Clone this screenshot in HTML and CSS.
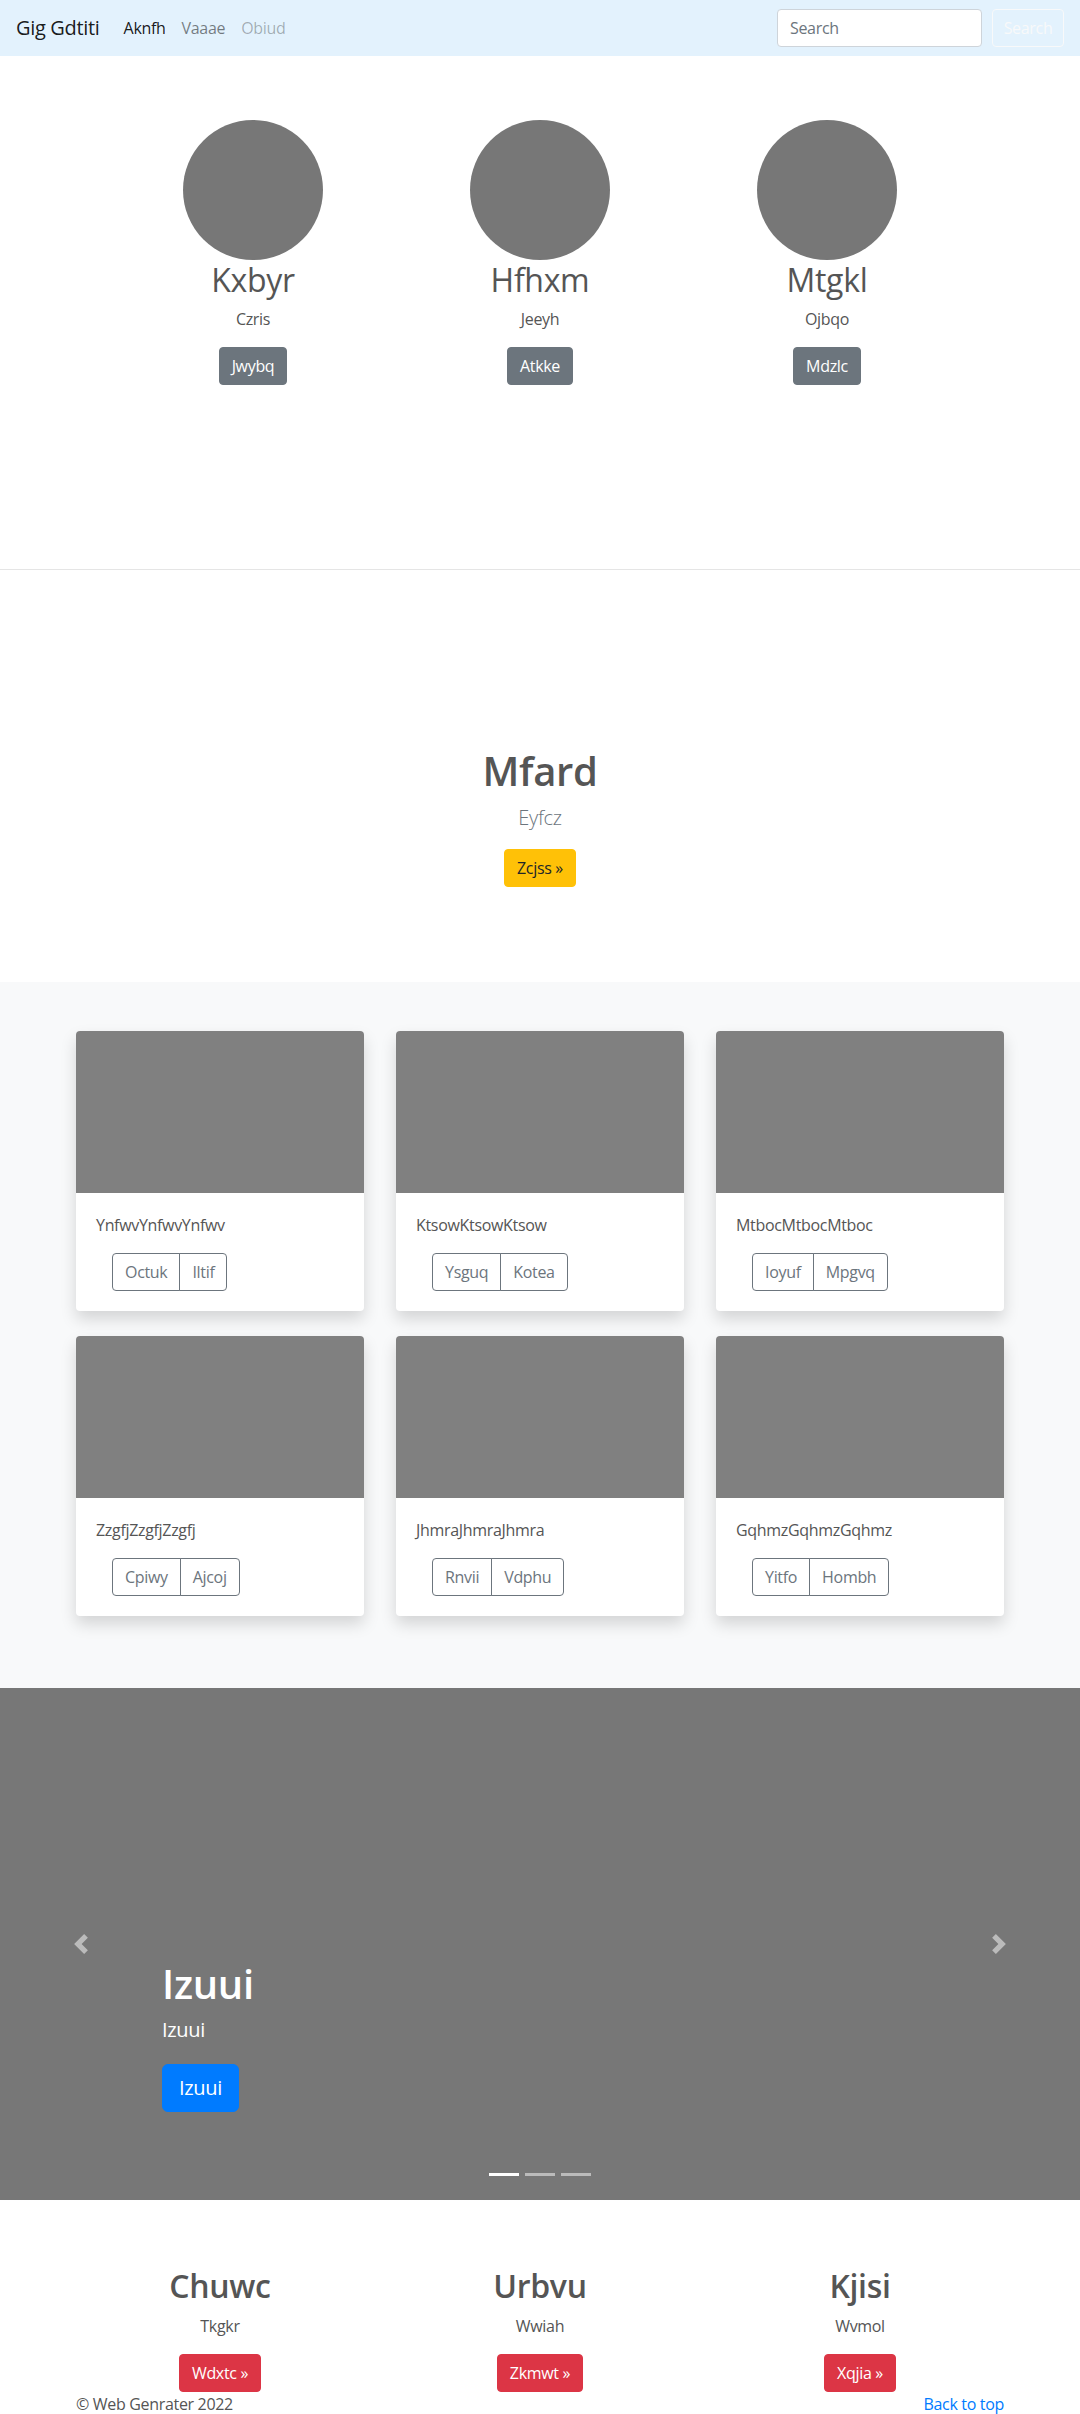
FILE: index.html
```html
<!DOCTYPE html>
<html lang="en">
<head>
<meta charset="utf-8">
<title>Gig Gdtiti</title>
<link rel="stylesheet" href="styles.css">
</head>
<body>
<nav class="navbar">
  <a class="brand" href="#">Gig Gdtiti</a>
  <ul class="nav-links">
    <li><a class="nav-link active" href="#">Aknfh</a></li>
    <li><a class="nav-link" href="#">Vaaae</a></li>
    <li><a class="nav-link disabled" href="#">Obiud</a></li>
  </ul>
  <form class="search">
    <input class="search-input" type="text" placeholder="Search">
    <button class="search-btn" type="button">Search</button>
  </form>
</nav>

<section class="team">
  <div class="team-row">
    <div class="team-col">
      <div class="avatar"></div>
      <h2 class="team-name">Kxbyr</h2>
      <p class="team-sub">Czris</p>
      <a class="btn btn-secondary" href="#">Jwybq</a>
    </div>
    <div class="team-col">
      <div class="avatar"></div>
      <h2 class="team-name">Hfhxm</h2>
      <p class="team-sub">Jeeyh</p>
      <a class="btn btn-secondary" href="#">Atkke</a>
    </div>
    <div class="team-col">
      <div class="avatar"></div>
      <h2 class="team-name">Mtgkl</h2>
      <p class="team-sub">Ojbqo</p>
      <a class="btn btn-secondary" href="#">Mdzlc</a>
    </div>
  </div>
</section>

<hr class="divider">

<section class="hero">
  <h1 class="hero-title">Mfard</h1>
  <p class="hero-lead">Eyfcz</p>
  <a class="btn btn-warning" href="#">Zcjss »</a>
</section>

<section class="album">
  <div class="card-grid">
    <div class="card">
      <div class="card-img"></div>
      <div class="card-body">
        <p class="card-text">YnfwvYnfwvYnfwv</p>
        <div class="btn-group"><button class="btn btn-outline" type="button">Octuk</button><button class="btn btn-outline" type="button">Iltif</button></div>
      </div>
    </div>
    <div class="card">
      <div class="card-img"></div>
      <div class="card-body">
        <p class="card-text">KtsowKtsowKtsow</p>
        <div class="btn-group"><button class="btn btn-outline" type="button">Ysguq</button><button class="btn btn-outline" type="button">Kotea</button></div>
      </div>
    </div>
    <div class="card">
      <div class="card-img"></div>
      <div class="card-body">
        <p class="card-text">MtbocMtbocMtboc</p>
        <div class="btn-group"><button class="btn btn-outline" type="button">Ioyuf</button><button class="btn btn-outline" type="button">Mpgvq</button></div>
      </div>
    </div>
    <div class="card">
      <div class="card-img"></div>
      <div class="card-body">
        <p class="card-text">ZzgfjZzgfjZzgfj</p>
        <div class="btn-group"><button class="btn btn-outline" type="button">Cpiwy</button><button class="btn btn-outline" type="button">Ajcoj</button></div>
      </div>
    </div>
    <div class="card">
      <div class="card-img"></div>
      <div class="card-body">
        <p class="card-text">JhmraJhmraJhmra</p>
        <div class="btn-group"><button class="btn btn-outline" type="button">Rnvii</button><button class="btn btn-outline" type="button">Vdphu</button></div>
      </div>
    </div>
    <div class="card">
      <div class="card-img"></div>
      <div class="card-body">
        <p class="card-text">GqhmzGqhmzGqhmz</p>
        <div class="btn-group"><button class="btn btn-outline" type="button">Yitfo</button><button class="btn btn-outline" type="button">Hombh</button></div>
      </div>
    </div>
  </div>
</section>

<section class="carousel">
  <a class="carousel-control prev" href="#">
    <svg class="control-icon" viewBox="0 0 8 8" width="20" height="20"><path d="M5.25 0l-4 4 4 4 1.5-1.5L4.25 4l2.5-2.5L5.25 0z" fill="#fff"/></svg>
  </a>
  <div class="carousel-caption">
    <h1 class="caption-title">Izuui</h1>
    <p class="caption-text">Izuui</p>
    <div class="caption-action"><a class="btn btn-lg btn-primary" href="#">Izuui</a></div>
  </div>
  <a class="carousel-control next" href="#">
    <svg class="control-icon" viewBox="0 0 8 8" width="20" height="20"><path d="M2.75 0l-1.5 1.5L3.75 4l-2.5 2.5L2.75 8l4-4-4-4z" fill="#fff"/></svg>
  </a>
  <ol class="indicators">
    <li class="indicator active"></li>
    <li class="indicator"></li>
    <li class="indicator"></li>
  </ol>
</section>

<section class="features">
  <div class="feature-row">
    <div class="feature-col">
      <h2 class="feature-title">Chuwc</h2>
      <p class="feature-sub">Tkgkr</p>
      <a class="btn btn-danger" href="#">Wdxtc »</a>
    </div>
    <div class="feature-col">
      <h2 class="feature-title">Urbvu</h2>
      <p class="feature-sub">Wwiah</p>
      <a class="btn btn-danger" href="#">Zkmwt »</a>
    </div>
    <div class="feature-col">
      <h2 class="feature-title">Kjisi</h2>
      <p class="feature-sub">Wvmol</p>
      <a class="btn btn-danger" href="#">Xqjia »</a>
    </div>
  </div>
</section>

<footer class="footer">
  <p class="copyright">© Web Genrater 2022</p>
  <a class="back-top" href="#">Back to top</a>
</footer>
</body>
</html>
```

FILE: styles.css
```css
* { box-sizing: border-box; }

html, body {
  margin: 0;
  padding: 0;
}

body {
  font-family: "Open Sans", "Noto Sans", "Liberation Sans", sans-serif;
  font-size: 16px;
  line-height: 1.5;
  letter-spacing: -0.02em;
  color: #555;
  background: #fff;
}

a { text-decoration: none; }

h1, h2, p { margin: 0; }

/* ---------- navbar ---------- */
.navbar {
  display: flex;
  align-items: center;
  height: 56px;
  padding: 0 16px;
  background: #e3f2fd;
}

.brand {
  font-size: 20px;
  line-height: 30px;
  padding: 5px 0;
  margin-right: 16px;
  color: rgba(0, 0, 0, 0.9);
}

.nav-links {
  display: flex;
  list-style: none;
  margin: 0;
  padding: 0;
}

.nav-link {
  display: block;
  padding: 8px;
  color: rgba(0, 0, 0, 0.5);
}

.nav-link.active { color: rgba(0, 0, 0, 0.9); }
.nav-link.disabled { color: rgba(0, 0, 0, 0.3); }

.search {
  display: flex;
  align-items: center;
  margin-left: auto;
  gap: 10px;
}

.search-input {
  width: 205px;
  height: 38px;
  padding: 6px 12px;
  font-family: inherit;
  font-size: 16px;
  letter-spacing: inherit;
  color: #495057;
  background: #fff;
  border: 1px solid #ced4da;
  border-radius: 4px;
}

.search-input::placeholder { color: #6c757d; }

.search-btn {
  width: 72px;
  height: 38px;
  padding: 6px 8px;
  font-family: inherit;
  font-size: 16px;
  letter-spacing: inherit;
  color: #f8f9fa;
  background: transparent;
  border: 1px solid #f8f9fa;
  border-radius: 4px;
}

/* ---------- buttons ---------- */
.btn {
  display: inline-block;
  padding: 6px 12px;
  font-family: inherit;
  font-size: 16px;
  line-height: 24px;
  letter-spacing: inherit;
  border: 1px solid transparent;
  border-radius: 4px;
  text-align: center;
  cursor: pointer;
}

.btn-secondary { color: #fff; background: #6c757d; border-color: #6c757d; }
.btn-warning { color: #212529; background: #ffc107; border-color: #ffc107; }
.btn-danger { color: #fff; background: #dc3545; border-color: #dc3545; }
.btn-primary { color: #fff; background: #007bff; border-color: #007bff; }

.btn-lg {
  padding: 8px 16px;
  font-size: 20px;
  line-height: 30px;
  border-radius: 6px;
}

.btn-outline {
  color: #6c757d;
  background: transparent;
  border-color: #6c757d;
}

/* ---------- team ---------- */
.team {
  padding: 64px 0 184px;
}

.team-row {
  display: grid;
  grid-template-columns: repeat(3, 287px);
  justify-content: center;
}

.team-col {
  display: flex;
  flex-direction: column;
  align-items: center;
  text-align: center;
}

.avatar {
  width: 140px;
  height: 140px;
  border-radius: 50%;
  background: #777;
}

.team-name {
  margin-top: 1px;
  margin-bottom: 8px;
  font-size: 32px;
  font-weight: 400;
  line-height: 1.2;
}

.team-sub {
  margin-bottom: 16px;
}

.divider {
  margin: 0;
  border: 0;
  border-top: 1px solid rgba(0, 0, 0, 0.1);
}

/* ---------- hero ---------- */
.hero {
  padding: 177px 0 95px;
  text-align: center;
}

.hero-title {
  margin-bottom: 8px;
  font-size: 40px;
  font-weight: 600;
  line-height: 1.2;
}

.hero-lead {
  margin-bottom: 16px;
  font-size: 20px;
  font-weight: 300;
  line-height: 30px;
  color: #6c757d;
}

/* ---------- album ---------- */
.album {
  padding: 49px 0 72px;
  background: #f8f9fa;
}

.card-grid {
  display: grid;
  grid-template-columns: repeat(3, 288px);
  justify-content: center;
  column-gap: 32px;
  row-gap: 25px;
}

.card {
  background: #fff;
  border-radius: 4px;
  overflow: hidden;
  box-shadow: 0 8px 16px rgba(0, 0, 0, 0.15);
}

.card-img {
  height: 162px;
  background: #808080;
}

.card-body {
  padding: 20px;
}

.card-text {
  margin-bottom: 16px;
}

.btn-group {
  display: inline-flex;
  margin-left: 16px;
}

.btn-group .btn:first-child {
  border-top-right-radius: 0;
  border-bottom-right-radius: 0;
}

.btn-group .btn + .btn {
  margin-left: -1px;
  border-top-left-radius: 0;
  border-bottom-left-radius: 0;
}

/* ---------- carousel ---------- */
.carousel {
  position: relative;
  height: 512px;
  background: #777;
}

.carousel-control {
  position: absolute;
  top: 0;
  bottom: 0;
  width: 15%;
  display: flex;
  align-items: center;
  justify-content: center;
}

.carousel-control.prev { left: 0; }
.carousel-control.next { right: 0; }

.control-icon {
  display: block;
  opacity: 0.5;
}

.carousel-caption {
  position: absolute;
  left: 15%;
  right: 15%;
  bottom: 48px;
  padding: 20px 0;
  color: #fff;
  text-align: left;
}

.caption-title {
  margin-bottom: 8px;
  font-size: 40px;
  font-weight: 600;
  line-height: 48px;
}

.caption-text {
  margin-bottom: 20px;
  font-size: 20px;
  line-height: 28px;
}

.caption-action {
  display: flex;
  margin-bottom: 20px;
}

.indicators {
  position: absolute;
  left: 0;
  right: 0;
  bottom: 24px;
  display: flex;
  justify-content: center;
  gap: 6px;
  margin: 0;
  padding: 0;
  list-style: none;
}

.indicator {
  width: 30px;
  height: 3px;
  background: #fff;
  opacity: 0.5;
}

.indicator.active { opacity: 1; }

/* ---------- features ---------- */
.features {
  padding-top: 67px;
}

.feature-row {
  display: grid;
  grid-template-columns: repeat(3, 320px);
  justify-content: center;
}

.feature-col {
  display: flex;
  flex-direction: column;
  align-items: center;
  text-align: center;
}

.feature-title {
  margin-bottom: 8px;
  font-size: 32px;
  font-weight: 600;
  line-height: 1.2;
}

.feature-sub {
  margin-bottom: 16px;
}

/* ---------- footer ---------- */
.footer {
  display: flex;
  justify-content: space-between;
  width: 928px;
  margin: 0 auto;
}

.back-top { color: #007bff; }
```
